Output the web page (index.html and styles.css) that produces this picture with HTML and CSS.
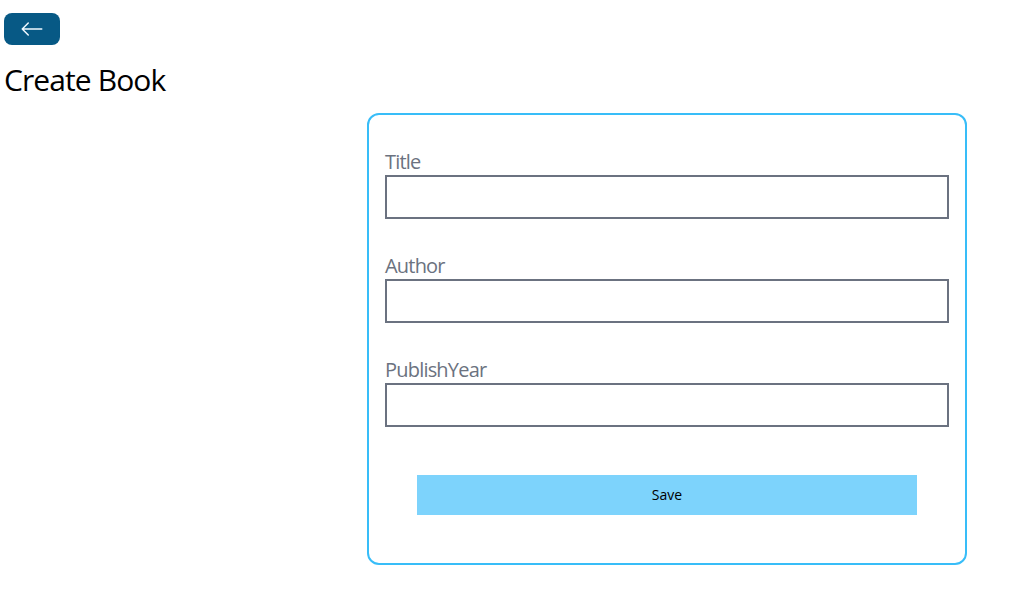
FILE: index.html
```html
<!DOCTYPE html>
<html lang="en">
<head>
<meta charset="utf-8">
<title>Create Book</title>
<link rel="stylesheet" href="styles.css">
</head>
<body>
<div class="page">
  <div class="back-row">
    <a class="back-btn" href="#" aria-label="Back">
      <svg class="back-icon" viewBox="0 0 16 16" width="24" height="24" fill="none" stroke="currentColor" stroke-width="1" stroke-linecap="round" stroke-linejoin="round">
        <path d="M14.5 8H1.5M5.5 4L1.5 8L5.5 12"/>
      </svg>
    </a>
  </div>
  <h1 class="title">Create Book</h1>
  <div class="card">
    <div class="field">
      <label class="label">Title</label>
      <input class="input" type="text">
    </div>
    <div class="field">
      <label class="label">Author</label>
      <input class="input" type="text">
    </div>
    <div class="field">
      <label class="label">PublishYear</label>
      <input class="input" type="number">
    </div>
    <button class="save">Save</button>
  </div>
</div>
</body>
</html>
```
FILE: styles.css
```css
* { box-sizing: border-box; }
html, body { margin: 0; padding: 0; background: #fff; }
body {
  font-family: "Open Sans", "Noto Sans", sans-serif;
  color: #000;
}
.page {
  padding: 13px 4px 0 4px;
}
.back-row { display: flex; }
.back-btn {
  display: flex;
  align-items: center;
  background: #075985;
  color: #f0f9ff;
  padding: 4px 16px;
  border-radius: 8px;
  text-decoration: none;
}
.back-icon { display: block; }
.title {
  font-size: 30px;
  line-height: 36px;
  font-weight: 400;
  letter-spacing: -0.9px;
  margin: 16px 0;
  position: relative;
  top: 1px;
}
.card {
  display: flex;
  flex-direction: column;
  width: 600px;
  margin-left: 363px;
  border: 2px solid #38bdf8;
  border-radius: 12px;
  padding: 16px;
}
.field {
  display: flex;
  flex-direction: column;
  margin: 16px 0;
}
.label {
  font-size: 20px;
  line-height: 28px;
  color: #6b7280;
  letter-spacing: -0.8px;
  margin-right: 16px;
  padding-top: 1px;
  margin-bottom: -1px;
}
.input {
  width: 100%;
  height: 44px;
  border: 2px solid #6b7280;
  padding: 8px 16px;
  font: inherit;
  font-size: 16px;
  line-height: 24px;
  outline: none;
  background: #fff;
  -moz-appearance: textfield;
}
.input::-webkit-outer-spin-button,
.input::-webkit-inner-spin-button { -webkit-appearance: none; margin: 0; }
.save {
  margin: 32px;
  padding: 8px;
  height: 40px;
  background: #7dd3fc;
  border: none;
  font-family: inherit;
  font-size: 14px;
  line-height: 24px;
  color: #000;
}
```
